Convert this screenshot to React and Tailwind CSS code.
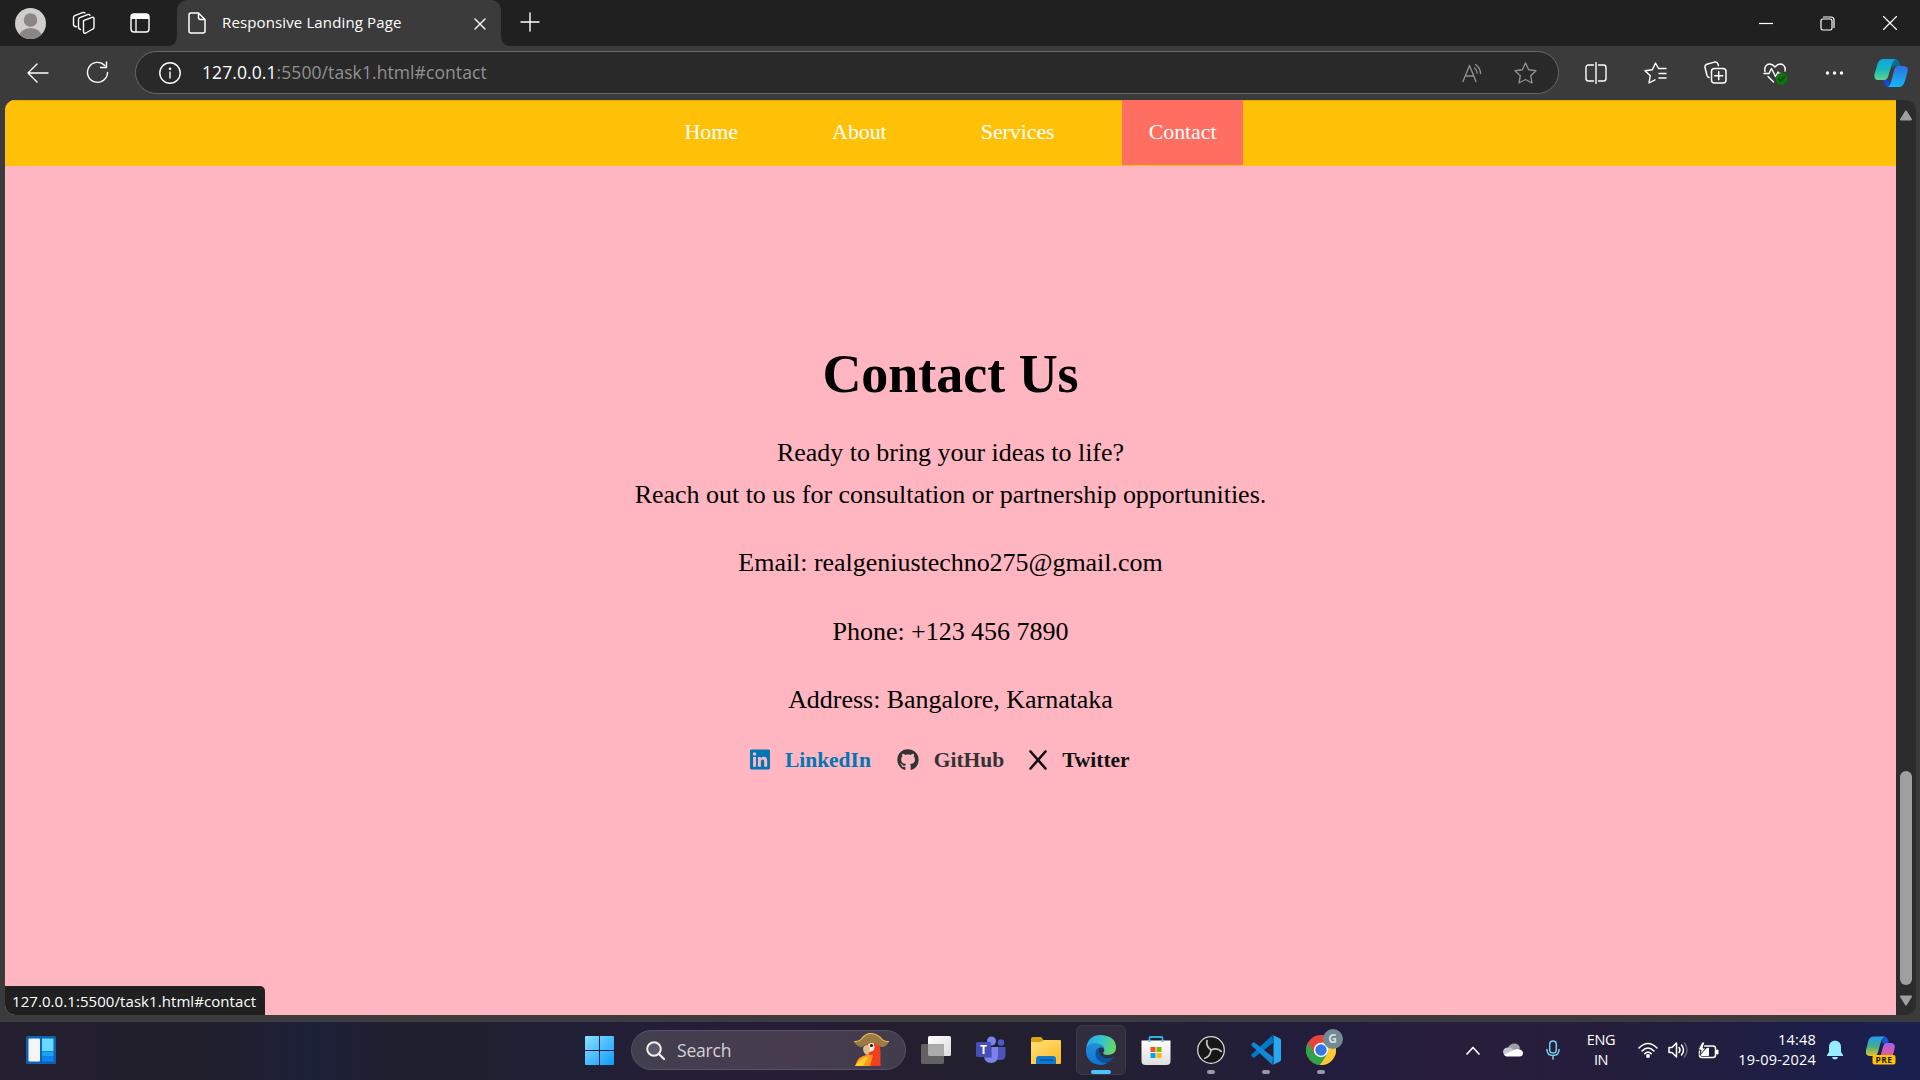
import React from "react";
import { FaLinkedin, FaGithub } from "react-icons/fa";

const line = { fill: "none", stroke: "currentColor", strokeWidth: 1.4, strokeLinecap: "round", strokeLinejoin: "round" };

function Svg({ w, h, className = "", children, ...rest }) {
  return (
    <svg width={w} height={h} viewBox={`0 0 ${w} ${h}`} className={`shrink-0 ${className}`} {...rest}>
      {children}
    </svg>
  );
}

function TitleBar() {
  return (
    <header className="flex h-[46px] shrink-0 bg-[#202020] text-white">
      <div className="flex w-[177px] shrink-0 items-center pl-[15px]">
        <Svg w={31} h={31}>
          <defs>
            <clipPath id="avatar"><circle cx="15.5" cy="15.5" r="15.5" /></clipPath>
          </defs>
          <g clipPath="url(#avatar)">
            <rect width="31" height="31" fill="#d0cecb" />
            <circle cx="15.5" cy="12" r="6.8" fill="#8a8684" />
            <ellipse cx="15.5" cy="29" rx="11.5" ry="9" fill="#8a8684" />
          </g>
        </Svg>
        <Svg w={24} h={24} className="ml-[26px]" {...line}>
          <path d="M11.5 9.6 20 6.4q2-.7 2 1.4v8.4q0 1.3-1.2 1.8l-7 4q-2.3 1-2.3-1.200z" />
          <path d="M8.500 18.500q-2-.3-2-2V8.700q0-1.500 1.300-2.100L15.500 3.600q1.500-.6 2.500.7" />
          <path d="M4.500 15.800q-3-.3-3-2V6.700q0-1.500 1.300-2.100L10.500 1.600q1.500-.6 2.500.3" />
        </Svg>
        <Svg w={20} h={20} className="ml-[34px]">
          <rect x="1" y="1" width="18" height="18" rx="3" fill="none" stroke="#fff" strokeWidth="1.4" />
          <path d="M1 6V4q0-3 3-3h12q3 0 3 3v2z" fill="#fff" />
          <path d="M6 6v13" stroke="#fff" strokeWidth="1.300" />
        </Svg>
      </div>
      <div className="relative flex w-[324px] shrink-0 items-center rounded-t-[10px] bg-[#3b3b3b] pl-[11px]">
        <Svg w={10} h={10} className="absolute -left-[10px] bottom-0"><path d="M10 0v10H0Q10 10 10 0" fill="#3b3b3b" /></Svg>
        <Svg w={10} h={10} className="absolute -right-[10px] bottom-0"><path d="M0 0v10h10Q0 10 0 0" fill="#3b3b3b" /></Svg>
        <Svg w={18} h={22} {...line} strokeWidth="1.5">
          <path d="M3 1h7.500L17 7.500V19q0 2-2 2H3q-2 0-2-2V3q0-2 2-2zM10.500 1v4.500q0 2 2 2H17" />
        </Svg>
        <span className="ml-4 w-[181px] whitespace-nowrap pb-[2px] font-['Open_Sans',sans-serif] text-[15px] tracking-[0.13px]">Responsive Landing Page</span>
        <Svg w={12} h={12} className="ml-[71px] mt-[1px]" {...line}><path d="M1 1l10 10M11 1 1 11" /></Svg>
      </div>
      <Svg w={20} h={20} className="ml-[19px] mt-[12px]" {...line}><path d="M10 1v18M1 10h18" /></Svg>
      <div className="ml-auto flex items-center pr-[23px]">
        <Svg w={14} h={14}><path d="M0 7.500h14" stroke="#fff" strokeWidth="1.200" /></Svg>
        <Svg w={15} h={15} className="ml-[47px]" {...line} strokeWidth="1.200">
          <rect x="1" y="3" width="11" height="11" rx="1.800" />
          <path d="M3.500 1H11q3 0 3 3v7.500" />
        </Svg>
        <Svg w={14} h={14} className="ml-[48px]" {...line} strokeWidth="1.200"><path d="M.5.5l13 13M13.500.5l-13 13" /></Svg>
      </div>
    </header>
  );
}

function ToolBar() {
  return (
    <div className="flex h-[54px] shrink-0 items-center bg-[#3b3b3b] pb-[1px] text-white">
      <Svg w={22} h={20} className="ml-[27px]" {...line}><path d="M21 10H1M10 1 1 10l9 9" /></Svg>
      <Svg w={23} h={23} className="ml-[37px]" {...line}>
        <path d="M18.800 4.500A10 10 0 1 0 21.500 11.500M20.500 1v5.500h-6" />
      </Svg>
      <div className="ml-[26px] flex h-[43px] w-[1424px] items-center rounded-full border border-[#686868] bg-[#292929]">
        <Svg w={22} h={22} className="ml-[23px]" {...line}>
          <circle cx="11" cy="11" r="10.200" />
          <path d="M11 10v6" />
          <circle cx="11" cy="6.800" r=".6" fill="#fff" />
        </Svg>
        <span className="ml-[21px] whitespace-nowrap font-['Open_Sans',sans-serif] text-[17.500px] tracking-[0.08px] text-[#919191]">
          <span className="text-white">127.0.0.1</span>:5500/task1.html#contact
        </span>
        <Svg w={21} h={20} className="ml-auto text-[#8f8f8f]" {...line}>
          <path d="M1 18.500 7.500 2.500l6.500 16M3.200 13h8.500" />
          <path d="M12.500 5q2.500 2 2.500 5M13.500 1.500q5 3.500 5 9" />
        </Svg>
        <Svg w={23} h={22} className="ml-[31px] mr-[21px] text-[#8f8f8f]" {...line}>
          <path d="M11.500 1l3.200 6.700 7.300 1-5.300 5 1.300 7.300-6.500-3.500L5 21l1.300-7.300L1 8.700l7.300-1z" />
        </Svg>
      </div>
      <Svg w={22} h={22} className="ml-[26px]" {...line}>
        <path d="M8.500 3H3.500Q1 3 1 5.500v11Q1 19 3.500 19h5M13.500 3h5Q21 3 21 5.500v11q0 2.500-2.500 2.500h-5M11 .5v21" />
      </Svg>
      <Svg w={23} h={22} className="ml-[37px]" {...line}>
        <path d="M15.500 6.500h-1L11.500 1 8.300 7.700 1 8.700l5.300 5L5 21l6-3.200M15.500 6.500H22M15 11.500h7M15 16h7" />
      </Svg>
      <Svg w={23} h={23} className="ml-[37px]" {...line} strokeWidth="1.500">
        <rect x="7.500" y="7.500" width="14.500" height="14.500" rx="3" />
        <path d="M14.700 10.800v8M10.700 14.800h8M5 16.500q-1.500-.5-2-2L1 6.500Q.6 4 2.800 3.200L10.500 1.100q2.400-.5 3.300 1.600l.6 1.900" />
      </Svg>
      <Svg w={25} h={25} className="ml-[36px] mt-[4px]" {...line}>
        <path d="M2 9.500Q1 4.500 4.500 2.500 8.500.8 12 5q3.500-4.200 7.500-2.500Q23 4.500 22 9M1 11.500h5L8.500 6.500l4 8 2.500-4.500 1 1.500h1.500M5 14.500l5.500 5.500" />
        <circle cx="18.500" cy="17" r="6" fill="#0f7310" stroke="none" />
        <path d="M15.800 17l2 2 3.500-4" stroke="#063d06" />
      </Svg>
      <Svg w={19} h={6} className="ml-[37px]">
        <g fill="#fff"><circle cx="2.500" cy="3" r="1.700" /><circle cx="9.500" cy="3" r="1.700" /><circle cx="16.500" cy="3" r="1.700" /></g>
      </Svg>
      <Svg w={34} h={30} className="ml-[30px]">
        <defs>
          <linearGradient id="cpL" x1="0" y1="0" x2="0" y2="1"><stop offset="0" stopColor="#0aa5e6" /><stop offset=".5" stopColor="#17b9bd" /><stop offset="1" stopColor="#62d58f" /></linearGradient>
          <linearGradient id="cpR" x1="0" y1="0" x2="0" y2="1"><stop offset="0" stopColor="#3070e0" /><stop offset="1" stopColor="#12b9fb" /></linearGradient>
        </defs>
        <path d="M18 1h3q3 0 4 3l1.500 4H21q-2 0-3 2z" fill="#0a6c9d" />
        <path d="M9 22h7l-1 4q-1 3 3 3-5 1-7-2z" fill="#1645d8" />
        <path d="M10 1h12q-3 1-4 5l-4 13q-1 3-4 3H4Q-.5 22 .5 16L3.500 6Q5 1 10 1z" fill="url(#cpL)" />
        <path d="M24 8h6q5 .5 3.500 6l-3 10q-1.500 5-6 5H13q3-.5 4-5l3.500-13Q21.500 8 24 8z" fill="url(#cpR)" />
      </Svg>
    </div>
  );
}

const links = ["Home", "About", "Services", "Contact"];

function WebPage() {
  return (
    <div className="flex h-[921px] shrink-0 bg-[#3b3b3b] pb-[6px] pl-[5px] pr-1 font-['Liberation_Serif',serif]">
      <div className="relative flex w-[1891px] flex-col overflow-hidden rounded-l-[10px] bg-[#ffb6c1]">
        <nav className="flex h-[66px] shrink-0 justify-center gap-[41px] border-t border-[#e6ad08] bg-[#ffc107] pb-[1px] text-[22px] tracking-[-0.1px] text-white">
          {links.map((label) => (
            <a key={label} className={label === "Contact" ? "-mt-px flex items-center bg-[#ff6f61] px-[26.600px] pb-[3px]" : "-mt-px flex items-center px-[26.600px] pb-[3px]"}>
              {label}
            </a>
          ))}
        </nav>
        <main className="flex flex-col items-center pt-[165px] text-[26px] leading-[41.600px] tracking-[-0.03px] text-black">
          <h1 className="text-[54px] font-bold leading-[86px]">Contact Us</h1>
          <p className="mt-[15px] text-center">
            Ready to bring your ideas to life?
            <br />
            Reach out to us for consultation or partnership opportunities.
          </p>
          <p className="mt-[27px]">Email: realgeniustechno275@gmail.com</p>
          <p className="mt-[27px]">Phone: +123 456 7890</p>
          <p className="mt-[27px]">Address: Bangalore, Karnataka</p>
          <div className="mt-[18px] flex w-[401px] items-center text-[21.500px] font-bold leading-[42px]">
            <a className="flex items-center text-[#0077b5]">
              <FaLinkedin className="h-[23px] w-[20px]" />
              <span className="ml-[15px]">LinkedIn</span>
            </a>
            <a className="ml-[26px] flex items-center text-[#333333]">
              <FaGithub className="h-[22px] w-[22px]" />
              <span className="ml-[15px]">GitHub</span>
            </a>
            <a className="ml-[25px] flex items-center text-[#111111]">
              <Svg w={18} h={20}><path d="M1.500 1.500l15 17M16.500 1.500l-15 17" stroke="currentColor" strokeWidth="2.600" strokeLinecap="round" /></Svg>
              <span className="ml-[15px]">Twitter</span>
            </a>
          </div>
        </main>
        <div className="absolute bottom-0 left-0 flex h-[29px] w-[260px] items-center whitespace-nowrap rounded-tr-[5px] bg-[#202020] pt-px pl-[7px] font-['Open_Sans',sans-serif] text-[15px] tracking-[0.07px] text-white">
          127.0.0.1:5500/task1.html#contact
        </div>
      </div>
      <div className="flex w-5 flex-col items-center rounded-r-[10px] bg-[#2c2c2c] pt-[10px] pb-[9px]">
        <Svg w={14} h={11}><path d="M7 1.500 12 9.500H2z" fill="#9f9f9f" stroke="#9f9f9f" strokeWidth="2" strokeLinejoin="round" /></Svg>
        <div className="mt-auto h-[214px] w-3 rounded-full bg-[#9f9f9f]" />
        <Svg w={14} h={11} className="mt-[10px]"><path d="M7 9.500 12 1.500H2z" fill="#9f9f9f" stroke="#9f9f9f" strokeWidth="2" strokeLinejoin="round" /></Svg>
      </div>
    </div>
  );
}

function AppCell({ active, running, children }) {
  return (
    <div className="flex w-[55px] justify-center">
      <div className={active ? "relative flex h-[50px] w-[50px] items-center justify-center rounded-md border border-[#3d3a4a] bg-[#302d3f]" : "relative flex h-[50px] w-[50px] items-center justify-center"}>
        {children}
        {active && <span className="absolute bottom-0 h-1 w-5 rounded-full bg-[#4cc2ff]" />}
        {running && <span className="absolute bottom-[1px] h-1 w-2 rounded-full bg-[#9a98a4]" />}
      </div>
    </div>
  );
}

function Apps() {
  return (
    <div className="flex">
      <AppCell>
        <Svg w={30} h={28}>
          <defs><linearGradient id="tv" x1="0" y1="0" x2="1" y2="1"><stop stopColor="#fff" /><stop offset="1" stopColor="#dcdcdc" /></linearGradient></defs>
          <rect x="7" y="0" width="23" height="20" rx="1.500" fill="url(#tv)" />
          <rect x="0" y="8" width="23" height="20" rx="1.500" fill="#626262" />
          <path d="M7 8h14.500q1.500 0 1.500 1.500V20H8.500Q7 20 7 18.500z" fill="#aaaaaa" />
        </Svg>
      </AppCell>
      <AppCell>
        <Svg w={30} h={28}>
          <circle cx="25" cy="6.500" r="3.200" fill="#5059c9" />
          <path d="M21 11h8.500v8q0 5-5 5H21z" fill="#4b53bc" />
          <circle cx="15.500" cy="5" r="4.500" fill="#7b83eb" />
          <path d="M8 11h14v8q0 8-7 8t-7-8z" fill="#7b83eb" />
          <path d="M8 11h8v11H8z" fill="#5b62cc" />
          <rect x="0" y="6" width="15" height="15" rx="1.500" fill="#464eb8" />
          <text x="7.500" y="18" textAnchor="middle" fontSize="12" fontWeight="700" fill="#fff" fontFamily="Open Sans, sans-serif">T</text>
        </Svg>
      </AppCell>
      <AppCell>
        <Svg w={30} h={27}>
          <defs><linearGradient id="fold" x1="0" y1="0" x2="1" y2="1"><stop stopColor="#ffe07a" /><stop offset="1" stopColor="#ffba22" /></linearGradient></defs>
          <path d="M0 2q0-2 2-2h8l3 3.500V9H0z" fill="#dfa10f" />
          <path d="M0 5h10l3-2h16q1 0 1 1v22q0 1-1 1H0z" fill="url(#fold)" />
          <path d="M5 27v-5q0-3 3-3h14q3 0 3 3v5z" fill="#0d79cf" />
          <path d="M9 23h13" stroke="#07508f" strokeWidth="1.300" />
        </Svg>
      </AppCell>
      <AppCell active>
        <Svg w={30} h={30}>
          <defs>
            <linearGradient id="edA" x1="0" y1=".3" x2="1" y2=".5"><stop stopColor="#29a8ea" /><stop offset=".5" stopColor="#32c5cf" /><stop offset="1" stopColor="#69d85b" /></linearGradient>
            <linearGradient id="edB" x1="0" y1="0" x2="0" y2="1"><stop stopColor="#2190d8" /><stop offset="1" stopColor="#0d75d5" /></linearGradient>
          </defs>
          <path d="M.2 13Q2 0 15 0q15 1 15 12.500 0 7-8 7.500-5 0-4.800-2.500Q19 16 18 13 16 9 10 9 3 9 .2 13z" fill="url(#edA)" />
          <path d="M.2 13Q3 7.500 10 8q7 1 8 6.500-1-2.500-4-2-4 2-3 7.500 2 8 10 8-3 2-6 2Q0 29-.1 15z" fill="url(#edB)" />
          <path d="M13.500 12.600Q9 14 9.500 20q2 8 11 8.300 4-1.500 7.300-6-.4-.7-1.500 0-7 2.700-11.500-1.700Q12 16 13.500 12.600z" fill="#0b529f" />
        </Svg>
      </AppCell>
      <AppCell>
        <Svg w={30} h={29}>
          <defs><linearGradient id="st" x1="0" y1="0" x2="0" y2="1"><stop stopColor="#fff" /><stop offset="1" stopColor="#dedede" /></linearGradient></defs>
          <path d="M8.500 6V2q0-1 1-1h11q1 0 1 1v4" fill="none" stroke="#2eb1e6" strokeWidth="1.800" />
          <path d="M.5 4.500h29V25q0 4-4 4h-21q-4 0-4-4z" fill="url(#st)" />
          <path d="M7.600 4.500h1.800V6H7.600zM20.600 4.500h1.800V6h-1.800z" fill="#2eb1e6" />
          <rect x="9.500" y="11" width="5" height="5" fill="#f25022" /><rect x="15.500" y="11" width="5" height="5" fill="#7fba00" />
          <rect x="9.500" y="17" width="5" height="5" fill="#00a4ef" /><rect x="15.500" y="17" width="5" height="5" fill="#ffb900" />
        </Svg>
      </AppCell>
      <AppCell running>
        <Svg w={28} h={28}>
          <circle cx="14" cy="14" r="13.300" fill="#171718" stroke="#d6d6d8" strokeWidth="1.300" />
          <g fill="none" stroke="#c8c8ca" strokeWidth="1.700" strokeLinecap="round">
            <path d="M10 4.500Q8.500 10 14 14" />
            <path d="M10 4.500Q8.500 10 14 14" transform="rotate(120 14 14)" />
            <path d="M10 4.500Q8.500 10 14 14" transform="rotate(240 14 14)" />
          </g>
        </Svg>
      </AppCell>
      <AppCell running>
        <Svg w={30} h={30}>
          <path d="M22 8 3.500 22.500Q2.500 23 1.800 22.300L.5 21Q-.2 20 .7 19.300L21.500 0z" fill="#0078c8" />
          <path d="M22 22 3.500 7.500Q2.500 7 1.800 7.700L.5 9Q-.2 10 .7 10.700L21.500 30z" fill="#1487d4" />
          <path d="M21.500 0 29 3.400q1 .5 1 1.800v19.600q0 1.300-1 1.800L21.500 30q1-.5 1-2V2q0-1.500-1-2z" fill="#28a8f0" />
        </Svg>
      </AppCell>
      <AppCell running>
        <Svg w={30} h={30}>
          <circle cx="15" cy="15" r="15" fill="#e6463a" />
          <path d="M2 7.500A15 15 0 0 0 14 30L21.500 18.700H8.500z" fill="#2fa24c" />
          <path d="M14 30A15 15 0 0 0 28 7.500H15q7 1 6.500 11z" fill="#fcc934" />
          <circle cx="15" cy="15" r="7.200" fill="#fff" /><circle cx="15" cy="15" r="5.700" fill="#3478e8" />
        </Svg>
        <span className="absolute right-[3px] top-[4px] flex h-5 w-5 items-center justify-center rounded-full bg-[#738a96] font-['Open_Sans',sans-serif] text-[12px] font-bold text-[#d8dee2]">G</span>
      </AppCell>
    </div>
  );
}

function Tray() {
  return (
    <div className="ml-auto flex items-center pr-[24px] font-['Open_Sans',sans-serif] text-[15px] leading-[20px] text-white">
      <Svg w={14} h={9} {...line} strokeWidth="1.700"><path d="M1 8l6-6.500L13 8" /></Svg>
      <Svg w={20} h={14} className="ml-[23px]">
        <path d="M5 5q2-5 7-4.500 4.500.5 5 5L10 9z" fill="#a09ca8" /><path d="M4.500 13Q0 12.500 0 8.500 1 4 6 4.500q3 0 5 3l-5 5.500z" fill="#c9c6cd" /><path d="M3.500 13.500Q1.500 13 1 11.500L12 6.500q2-1 5 0 3 1 3 4-.5 3-3.500 3z" fill="#fff" />
      </Svg>
      <Svg w={14} h={20} className="ml-[23px] text-[#76d0f0]" {...line} strokeWidth="1.500"><rect x="3.700" y="1" width="6.600" height="12" rx="3.300" /><path d="M1 9.500q0 6 6 6t6-6M7 15.500V19" /></Svg>
      <div className="ml-[26px] w-[30px] text-center text-[14.500px] tracking-[-0.4px]">ENG<br />IN</div>
      <Svg w={20} h={16} className="ml-[22px]" {...line} strokeWidth="1.600"><path d="M1 6q9-9 18 0M4 9q6-6 12 0M6.800 11.700q3.200-3 6.400 0" /><circle cx="10" cy="14" r="1.200" fill="#fff" /></Svg>
      <Svg w={20} h={18} className="ml-[10px]" {...line} strokeWidth="1.500"><path d="M1 6.500h3L8.500 2v14L4 11.500H1zM11 6.500q2 2.500 0 5M13.500 4q4 5 0 10" /><path d="M16.500 2q5 7 0 14" stroke="#66627a" /></Svg>
      <Svg w={21} h={17} className="ml-[10px]">
        <rect x="1.500" y="4" width="16" height="11.500" rx="2.500" fill="none" stroke="#fff" strokeWidth="1.500" /><path d="M18.500 8v4h1.500V8zM3.500 13.500V9l7-3V13.500z" fill="#fff" stroke="#fff" />
        <path d="M4 0 0 8h3l-1 5 6-7H5l2-6z" fill="#fff" stroke="#221d3b" />
      </Svg>
      <div className="ml-[19px] w-[78px] whitespace-nowrap text-right text-[14.500px] tracking-[0.2px]">14:48<br />19-09-2024</div>
      <Svg w={16} h={20} className="ml-[11px]"><path d="M8 .5q6 .5 6 7V12l2 3v1H0v-1l2-3V7.500Q2 1 8 .5zM5 17h6q-.5 2.500-3 2.500T5 17z" fill="#99ebff" /></Svg>
      <Svg w={30} h={29} className="ml-[23px]">
        <defs>
          <linearGradient id="pA" x1="0" y1="0" x2="0" y2="1"><stop stopColor="#259bf2" /><stop offset=".5" stopColor="#3fae8b" /><stop offset="1" stopColor="#e6c72b" /></linearGradient>
          <linearGradient id="pB" x1="0" y1="0" x2="0" y2="1"><stop stopColor="#a45cf0" /><stop offset="1" stopColor="#f0627c" /></linearGradient>
        </defs>
        <path d="M14 .5h4q3 0 4 3l1 4h-6z" fill="#1554ce" />
        <path d="M8 .5h11q-3 1-4 5L12 16q-1 4-4 4H4q-5 0-4-6L2 6Q3 .5 8 .5z" fill="url(#pA)" />
        <path d="M20 7h5q5 .5 3.500 6L26 22H14l3-11q1-4 3-4z" fill="url(#pB)" />
        <rect x="6.500" y="19" width="23" height="9.500" rx="2" fill="#ffc400" />
        <text x="18" y="26.800" fontSize="8.500" fontWeight="700" textAnchor="middle" fill="#1d1a10" letterSpacing=".4" fontFamily="Open Sans, sans-serif">PRE</text>
      </Svg>
    </div>
  );
}

function Parrot() {
  return (
    <Svg w={35} h={34}>
      <path d="M11 13Q12 7 19 7q7.500 1 7.500 12v14H12z" fill="#f0401f" />
      <path d="M1 33Q4 22 14 22l5 0-3 11z" fill="#ff9a1e" />
      <path d="M1 33Q8 24 14 24l-5 9z" fill="#ffd02e" />
      <path d="M14 11l5-2q3 5 0 9l-4 1z" fill="#f6e9dc" />
      <path d="M9 15q2-5 6-2 2 4-1 9-5-1-5-7z" fill="#d8c08e" />
      <circle cx="17.500" cy="12.500" r="1.600" fill="#1f1a1a" />
      <path d="M0 8.500Q6 9 9 4q4-4.500 8.500-4T26 4q3 5 9 4.500-3 6-8 5.500-9-8-19 0-5 0-8-5.500z" fill="#9b7a43" />
      <path d="M0 8.500Q6 9 9 4q4-4 8.500-3.500T26 4q3 5 9 4.500" fill="none" stroke="#e0b650" strokeWidth="1.200" />
    </Svg>
  );
}

function TaskBar() {
  return (
    <footer className="flex h-[59px] shrink-0 items-center border-t border-[#3c3c48] bg-[linear-gradient(90deg,#241f2f_0px,#211f2c_200px,#1c2038_310px,#201f2c_420px,#1f2036_560px,#281c36_760px,#221f2e_960px,#231f35_1180px,#221d3d_1340px,#2a1d3c_1450px,#221e3b_1640px,#1b1f4e_1880px)] pb-[2px]">
      <Svg w={30} h={28} className="ml-[26px]">
        <rect width="30" height="28" rx="1.500" fill="#0c63b5" />
        <rect x="2.500" y="2.500" width="11.500" height="23" rx="1" fill="#f5f5f5" />
        <rect x="16" y="2.500" width="11.500" height="12.500" fill="#69d8ff" />
        <rect x="16" y="15.500" width="11.500" height="5" fill="#1ba0f7" /><rect x="16" y="21" width="11.500" height="4.500" fill="#0a84ee" />
      </Svg>
      <Svg w={29} h={29} className="ml-[529px]">
        <defs><linearGradient id="win" gradientUnits="userSpaceOnUse" x1="0" y1="0" x2="29" y2="29"><stop stopColor="#8ae0ff" /><stop offset="1" stopColor="#0b9bff" /></linearGradient></defs>
        <path d="M1 0h13v14H0V1q0-1 1-1zM15 0h13q1 0 1 1v13H15zM0 15h14v14H1q-1 0-1-1zM15 15h14v13q0 1-1 1H15z" fill="url(#win)" />
      </Svg>
      <div className="ml-[17px] mr-[2px] flex h-10 w-[275px] items-center rounded-full border border-[#565264] bg-[linear-gradient(90deg,#413f4e,#483b4f_60%,#413d4d)] pl-[14px] pr-[16px]">
        <Svg w={19} h={19}><circle cx="8" cy="8" r="6.800" fill="#5c586a" stroke="#f0f0f0" strokeWidth="2" /><path d="M13 13l5 5" stroke="#f0f0f0" strokeWidth="2.200" strokeLinecap="round" /></Svg>
        <span className="ml-[12px] font-['Open_Sans',sans-serif] text-[17.500px] tracking-[-0.2px] text-[#d4d2d8]">Search</span>
        <div className="ml-auto"><Parrot /></div>
      </div>
      <Apps />
      <Tray />
    </footer>
  );
}

export default function App() {
  return (
    <div className="flex h-[1080px] w-[1920px] flex-col overflow-hidden bg-[#3b3b3b]">
      <TitleBar />
      <ToolBar />
      <WebPage />
      <TaskBar />
    </div>
  );
}
